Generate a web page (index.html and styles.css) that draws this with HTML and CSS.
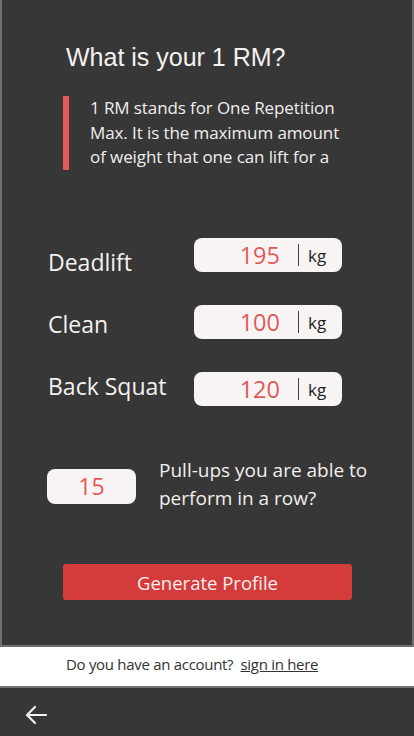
FILE: index.html
```html
<!DOCTYPE html>
<html>
<head>
<meta charset="utf-8">
<link rel="stylesheet" href="styles.css">
</head>
<body>
<div class="app">
  <main class="panel">
    <h1 class="title">What is your 1 RM?</h1>
    <div class="note">
      <p class="note-text">1 RM stands for One Repetition Max. It is the maximum amount of weight that one can lift for a</p>
    </div>
    <div class="lifts">
      <div class="lift lift-low">
        <span class="lift-name">Deadlift</span>
        <div class="field"><span class="field-val">195</span><span class="field-sep"></span><span class="field-unit">kg</span></div>
      </div>
      <div class="lift lift-mid">
        <span class="lift-name">Clean</span>
        <div class="field"><span class="field-val">100</span><span class="field-sep"></span><span class="field-unit">kg</span></div>
      </div>
      <div class="lift lift-high">
        <span class="lift-name">Back Squat</span>
        <div class="field"><span class="field-val">120</span><span class="field-sep"></span><span class="field-unit">kg</span></div>
      </div>
    </div>
    <div class="pullups">
      <div class="pull-field">15</div>
      <p class="pull-text">Pull-ups you are able to perform in a row?</p>
    </div>
    <button class="btn">Generate Profile</button>
  </main>
  <div class="account">Do you have an account?&nbsp;&nbsp;<a class="account-link" href="#">sign in here</a></div>
  <nav class="navbar">
    <svg class="back" width="24" height="20" viewBox="0 0 24 20"><path d="M22 10H3M11 2L3 10l8 8" fill="none" stroke="#f2f2f2" stroke-width="2.2" stroke-linecap="round" stroke-linejoin="round"/></svg>
  </nav>
</div>
</body>
</html>
```
FILE: styles.css
```css
* { box-sizing: border-box; }
html, body { margin: 0; padding: 0; }
body { width: 414px; height: 736px; background: #ffffff; font-family: "Open Sans", "Noto Sans", sans-serif; overflow: hidden; }
.app { display: flex; flex-direction: column; height: 736px; }
.panel {
  height: 647px;
  background: #373737;
  border: 2px solid #6f6f6f;
  border-top: none;
  padding: 42px 0 0 0;
  display: flex;
  flex-direction: column;
}
.title {
  margin: 0 0 0 64px;
  font-family: "Liberation Sans", Arial, sans-serif;
  font-weight: normal;
  font-size: 25px;
  line-height: 30px;
  color: #f4f1f1;
}
.note {
  margin: 24px 0 0 61px;
  border-left: 6px solid #e25a5a;
  padding-left: 21px;
  width: 285px;
}
.note-text {
  margin: 0;
  font-size: 17px;
  line-height: 24.5px;
  height: 74px;
  color: #f2eeee;
  letter-spacing: -0.1px;
}
.lifts {
  margin-top: 68px;
  padding-left: 46px;
  display: flex;
  flex-direction: column;
  gap: 33px;
}
.lift { display: flex; align-items: center; height: 34px; }
.lift-name {
  width: 146px;
  font-size: 23px;
  color: #f4f1f1;
}
.lift-low .lift-name { padding-top: 14px; }
.lift-mid .lift-name { padding-top: 4px; }
.lift-high .lift-name { padding-bottom: 6px; }
.field {
  width: 148px;
  height: 34px;
  background: #f9f4f4;
  border-radius: 8px;
  display: flex;
  align-items: center;
}
.field-val {
  width: 86px;
  text-align: right;
  color: #e05a5a;
  font-size: 23.5px;
}
.field-sep { width: 1px; height: 22px; background: #444; margin: 0 9px 0 18px; }
.field-unit { font-size: 17px; color: #222; }
.pullups { display: flex; align-items: flex-start; margin: 50px 0 0 45px; }
.pull-field {
  width: 89px; height: 35px; margin-top: 13px;
  background: #f9f4f4; border-radius: 8px;
  color: #e05a5a; font-size: 23px; text-align: center; line-height: 35px;
}
.pull-text { margin: 0 0 0 23px; font-size: 19px; line-height: 28px; color: #f2eeee; width: 230px; }
.btn {
  margin: 52px 0 0 61px;
  width: 289px; height: 36px;
  background: #d43c3c; border: none; border-radius: 3px;
  color: #f8eeee; font-family: inherit; font-size: 18.5px;
}
.account {
  height: 39px;
  display: flex; align-items: center;
  padding: 0 0 5px 66px;
  font-size: 15px; color: #333;
  letter-spacing: -0.3px;
}
.account-link { color: #333; }
.navbar {
  flex: 1;
  background: #373737;
  border-top: 2px solid #6f6f6f;
  display: flex; align-items: center;
  padding: 6px 0 0 24px;
}
```
